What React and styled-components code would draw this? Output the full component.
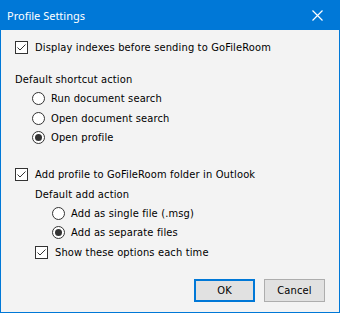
import React, { useState } from 'react';
import styled, { createGlobalStyle } from 'styled-components';

const GlobalStyle = createGlobalStyle`
    html, body {
        margin: 0;
        padding: 0;
        background: #ffffff;
    }
    * {
        box-sizing: border-box;
    }
`

const Window = styled.div`
    display: flex;
    flex-direction: column;
    width: 340px;
    height: 313px;
    border: 1px solid #0078d7;
    border-top: none;
    background: #f3f3f3;
    font-family: "DejaVu Sans Condensed", "DejaVu Sans", Tahoma, sans-serif;
    font-size: 11px;
    letter-spacing: 0.15px;
    color: #000000;
`

const TitleBar = styled.div`
    display: flex;
    align-items: center;
    justify-content: space-between;
    height: 30px;
    margin: 0 -1px;
    padding: 0 0 0 7px;
    background: #0078d7;
    color: #ffffff;
    letter-spacing: 0;
`

const Title = styled.span`
    font-family: "Noto Sans", "Segoe UI", sans-serif;
    font-size: 11px;
`

const CloseButton = styled.div`
    display: flex;
    align-items: center;
    justify-content: center;
    width: 46px;
    height: 30px;
`

const Body = styled.div`
    display: flex;
    flex-direction: column;
    flex: 1;
    padding: 7px 14px 10px 14px;
`

const Section = styled.div`
    display: flex;
    flex-direction: column;
    margin-top: ${p => p.$gap || 0}px;
    padding-left: ${p => p.$indent || 0}px;
`

const Row = styled.label`
    display: flex;
    align-items: center;
    height: ${p => p.$h || 20}px;
    padding-left: ${p => p.$indent || 0}px;
    white-space: nowrap;
`

const Caption = styled.div`
    display: flex;
    align-items: center;
    height: 20px;
    padding-left: ${p => p.$indent || 0}px;
`

const Box = styled.span`
    display: flex;
    align-items: center;
    justify-content: center;
    width: 13px;
    height: 13px;
    margin-right: 7px;
    border: 1px solid #333333;
    background: #ffffff;
`

const Circle = styled.span`
    display: flex;
    align-items: center;
    justify-content: center;
    width: 13px;
    height: 13px;
    margin-right: 6px;
    border: 1px solid #333333;
    border-radius: 50%;
    background: #ffffff;
`

const Dot = styled.span`
    width: 7px;
    height: 7px;
    border-radius: 50%;
    background: #333333;
`

const Footer = styled.div`
    display: flex;
    justify-content: flex-end;
    gap: 9px;
    margin-top: auto;
`

const Button = styled.button`
    width: 61px;
    height: 23px;
    padding: 0;
    border: ${p => p.$primary ? '2px solid #0078d7' : '1px solid #adadad'};
    background: #e1e1e1;
    font-family: "DejaVu Sans Condensed", "DejaVu Sans", Tahoma, sans-serif;
    font-size: 11px;
    letter-spacing: 0.15px;
    color: #000000;
`

function Check({ checked, label, indent, onClick }) {
    return (
        <Row $indent={indent} onClick={onClick}>
            <Box>
                {checked && (
                    <svg width="11" height="11" viewBox="0 0 11 11">
                        <path d="M1.5 5.5 L4 8 L9.5 2.5" fill="none" stroke="#333333" strokeWidth="1" />
                    </svg>
                )}
            </Box>
            {label}
        </Row>
    )
}

function Radio({ selected, label, h, onClick }) {
    return (
        <Row $h={h} onClick={onClick}>
            <Circle>{selected && <Dot />}</Circle>
            {label}
        </Row>
    )
}

export default function App() {

    const [displayIndexes, setDisplayIndexes] = useState(true);
    const [shortcut, setShortcut] = useState('profile');
    const [addToFolder, setAddToFolder] = useState(true);
    const [addAction, setAddAction] = useState('separate');
    const [showOptions, setShowOptions] = useState(true);

    return (
        <Window>
            <GlobalStyle />

            <TitleBar>
                <Title>Profile Settings</Title>
                <CloseButton>
                    <svg width="11" height="11" viewBox="0 0 11 11">
                        <path d="M0.5 0.5 L10.5 10.5 M10.5 0.5 L0.5 10.5" stroke="#ffffff" strokeWidth="1.2" />
                    </svg>
                </CloseButton>
            </TitleBar>

            <Body>
                <Check
                    checked={displayIndexes}
                    label="Display indexes before sending to GoFileRoom"
                    onClick={() => setDisplayIndexes(!displayIndexes)}
                />

                <Section $gap={12}>
                    <Caption>Default shortcut action</Caption>
                    <Section $indent={17}>
                        <Radio label="Run document search" h={19} selected={shortcut === 'run'} onClick={() => setShortcut('run')} />
                        <Radio label="Open document search" selected={shortcut === 'open'} onClick={() => setShortcut('open')} />
                        <Radio label="Open profile" h={19} selected={shortcut === 'profile'} onClick={() => setShortcut('profile')} />
                    </Section>
                </Section>

                <Section $gap={17}>
                    <Check
                        checked={addToFolder}
                        label="Add profile to GoFileRoom folder in Outlook"
                        onClick={() => setAddToFolder(!addToFolder)}
                    />
                    <Section $indent={20}>
                        <Caption>Default add action</Caption>
                        <Section $indent={17}>
                            <Radio label="Add as single file (.msg)" h={19} selected={addAction === 'single'} onClick={() => setAddAction('single')} />
                            <Radio label="Add as separate files" h={19} selected={addAction === 'separate'} onClick={() => setAddAction('separate')} />
                        </Section>
                        <Check
                            checked={showOptions}
                            label="Show these options each time"
                            onClick={() => setShowOptions(!showOptions)}
                        />
                    </Section>
                </Section>

                <Footer>
                    <Button $primary>OK</Button>
                    <Button>Cancel</Button>
                </Footer>
            </Body>
        </Window>
    )
}
